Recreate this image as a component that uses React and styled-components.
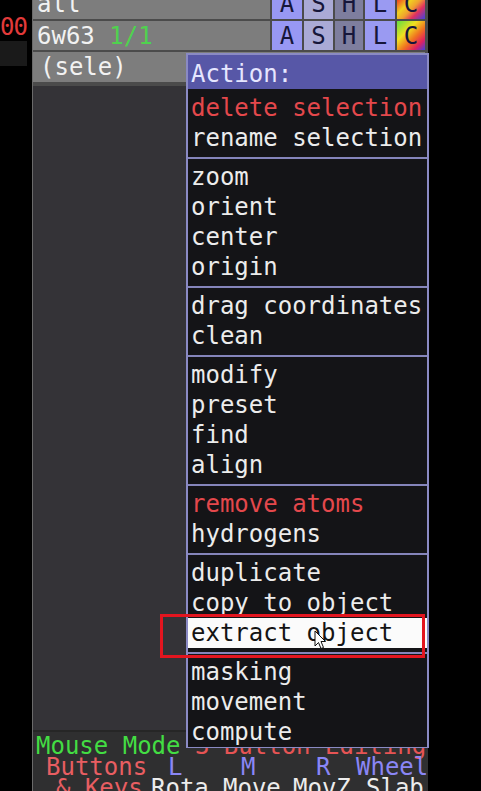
import React from 'react';
import styled, { createGlobalStyle } from 'styled-components';

const GlobalStyle = createGlobalStyle`
  body {
    margin: 0;
    background: #000;
    overflow: hidden;
  }
`;

const Screen = styled.div`
  position: relative;
  display: flex;
  width: 481px;
  height: 791px;
  overflow: hidden;
  background: #000;

  font-family: 'DejaVu Sans Mono', 'Liberation Mono', monospace;
  font-size: 24px;
`;

const LeftStrip = styled.div`
  display: flex;
  flex-direction: column;
  width: 32px;
  padding-top: 17px;
  flex-shrink: 0;
`;

const ValueCell = styled.div`
  display: flex;
  justify-content: flex-end;
  width: 27px;
  height: 20px;
  overflow: hidden;

  color: #e23a3a;
  line-height: 20px;
  letter-spacing: -1px;
  white-space: nowrap;
`;

const DarkCell = styled.div`
  margin-top: 4px;
  width: 27px;
  height: 25px;
  background: #1a1a1a;
`;

const Panel = styled.div`
  position: relative;
  display: flex;
  flex-direction: column;
  width: 395px;
  border-left: 1px solid #6a6a6a;
  background: #343337;
`;

const TopRows = styled.div`
  display: flex;
  flex-direction: column;
  gap: 2px;
  padding-bottom: 4px;
  background: #4b4b4b;
`;

const ObjRow = styled.div`
  display: flex;
  gap: 2px;
  height: ${(p) => p.$h}px;
  padding-right: 3px;
`;

const ObjName = styled.div`
  flex: 1;
  display: flex;
  align-items: ${(p) => (p.$cut ? 'flex-end' : 'center')};
  padding-left: ${(p) => p.$indent || 4}px;
  overflow: hidden;

  background: #7d7d7d;
  color: #f2f2f2;
  line-height: 30px;
  white-space: pre;
`;

const Green = styled.span`
  color: #4fd24f;
`;

const Buttons = styled.div`
  display: flex;
  gap: 2px;
`;

const ObjButton = styled.div`
  display: flex;
  align-items: ${(p) => (p.$cut ? 'flex-end' : 'center')};
  justify-content: center;
  width: ${(p) => p.$w}px;
  overflow: hidden;

  background: ${(p) => p.$bg};
  color: #16163a;
  line-height: 30px;
`;

const Body = styled.div`
  flex: 1;
`;

const Footer = styled.div`
  height: 55px;
  padding-top: 4px;
  border-top: 2px solid #262626;
  background: #2f2f30;
  line-height: 21px;
  white-space: pre;
`;

const FooterLine = styled.div`
  padding-left: 3px;
`;

const FooterGrid = styled.div`
  display: grid;
  grid-template-columns: 118px 72px 70px 73px 1fr;
`;

const Cell = styled.span`
  margin-left: ${(p) => p.$shift || 0}px;
  color: ${(p) => p.$color};
`;

const Menu = styled.div`
  position: absolute;
  top: 53px;
  left: 153px;
  width: 239px;
  border: 2px solid #8a8ac4;
  border-bottom-width: 1px;
  background: #141417;
`;

const MenuHeader = styled.div`
  height: 34px;
  padding-left: 3px;
  margin-bottom: 4px;
  background: #5757a7;
  color: #e6e6ff;
  line-height: 38px;
`;

const MenuItem = styled.div`
  height: 30px;
  padding-left: 3px;
  background: ${(p) => (p.$active ? '#fbfbfb' : 'transparent')};
  color: ${(p) => (p.$active ? '#141414' : p.$red ? '#e4484c' : '#ececec')};
  line-height: 30px;
  white-space: pre;
`;

const Separator = styled.div`
  display: flex;
  align-items: center;
  height: 9px;

  &::after {
    content: '';
    flex: 1;
    height: 2px;
    background: #8585bb;
  }
`;

const Annotation = styled.div`
  position: absolute;
  left: 160px;
  top: 614px;
  width: 259px;
  height: 38px;
  border: 3px solid #e3151f;
  pointer-events: none;
`;

const Cursor = styled.svg`
  position: absolute;
  left: 314px;
  top: 630px;
`;

const rainbow =
  'linear-gradient(135deg, #f04020 0%, #f0d020 30%, #f0a030 50%, #e03060 70%, #4040e0 100%)';
const rainbow2 =
  'linear-gradient(135deg, #60e040 0%, #f0e020 35%, #f07020 60%, #e02060 80%, #4040e0 100%)';

const buttonDefs = [
  { label: 'A', w: 30, bg: '#9898f4' },
  { label: 'S', w: 29, bg: '#aaaad6' },
  { label: 'H', w: 28, bg: '#7e7e9e' },
  { label: 'L', w: 30, bg: '#9a9af2' },
];

const menuGroups = [
  [
    { text: 'delete selection', red: true },
    { text: 'rename selection' },
  ],
  [{ text: 'zoom' }, { text: 'orient' }, { text: 'center' }, { text: 'origin' }],
  [{ text: 'drag coordinates' }, { text: 'clean' }],
  [{ text: 'modify' }, { text: 'preset' }, { text: 'find' }, { text: 'align' }],
  [{ text: 'remove atoms', red: true }, { text: 'hydrogens' }],
  [{ text: 'duplicate' }, { text: 'copy to object' }, { text: 'extract object', active: true }],
  [{ text: 'masking' }, { text: 'movement' }, { text: 'compute' }],
];

function ButtonSet({ cut, colorBg }) {
  return (
    <Buttons>
      {buttonDefs.map((b) => (
        <ObjButton key={b.label} $w={b.w} $bg={b.bg} $cut={cut}>
          {b.label}
        </ObjButton>
      ))}
      <ObjButton $w={28} $bg={colorBg} $cut={cut}>
        C
      </ObjButton>
    </Buttons>
  );
}

function App() {
  return (
    <Screen>
      <GlobalStyle />
      <LeftStrip>
        <ValueCell>00</ValueCell>
        <DarkCell />
      </LeftStrip>

      <Panel>
        <TopRows>
          <ObjRow $h={19}>
            <ObjName $cut>all</ObjName>
            <ButtonSet cut colorBg={rainbow} />
          </ObjRow>
          <ObjRow $h={29}>
            <ObjName>
              6w63 <Green>1/1</Green>
            </ObjName>
            <ButtonSet colorBg={rainbow2} />
          </ObjRow>
          <ObjRow $h={30}>
            <ObjName $indent={7}>(sele)</ObjName>
          </ObjRow>
        </TopRows>
        <Body />
        <Footer>
          <FooterLine>
            <Cell $color="#43dd43">Mouse Mode</Cell>
            <Cell $color="#e65454"> 3-Button Editing</Cell>
          </FooterLine>
          <FooterGrid>
            <Cell $shift={13} $color="#e85e62">Buttons</Cell>
            <Cell $shift={17} $color="#8a86f6">L</Cell>
            <Cell $shift={18} $color="#8a86f6">M</Cell>
            <Cell $shift={23} $color="#8a86f6">R</Cell>
            <Cell $shift={-10} $color="#8a86f6">Wheel</Cell>
          </FooterGrid>
          <FooterGrid>
            <Cell $shift={23} $color="#e85e62">&amp; Keys</Cell>
            <Cell $color="#ececec">Rota</Cell>
            <Cell $color="#ececec">Move</Cell>
            <Cell $color="#ececec">MovZ</Cell>
            <Cell $color="#ececec">Slab</Cell>
          </FooterGrid>
        </Footer>

        <Menu>
          <MenuHeader>Action:</MenuHeader>
          {menuGroups.map((group, gi) => (
            <React.Fragment key={gi}>
              {gi > 0 && <Separator />}
              {group.map((item) => (
                <MenuItem key={item.text} $red={item.red} $active={item.active}>
                  {item.text}
                </MenuItem>
              ))}
            </React.Fragment>
          ))}
        </Menu>
      </Panel>

      <Annotation />
      <Cursor width="13" height="20" viewBox="0 0 13 20">
        <path
          d="M1 1 L1 16 L4.5 12.5 L7 18.5 L9.5 17.5 L7 11.5 L11.5 11.5 Z"
          fill="#fff"
          stroke="#111"
          strokeWidth="1"
        />
      </Cursor>
    </Screen>
  );
}

export default App;
